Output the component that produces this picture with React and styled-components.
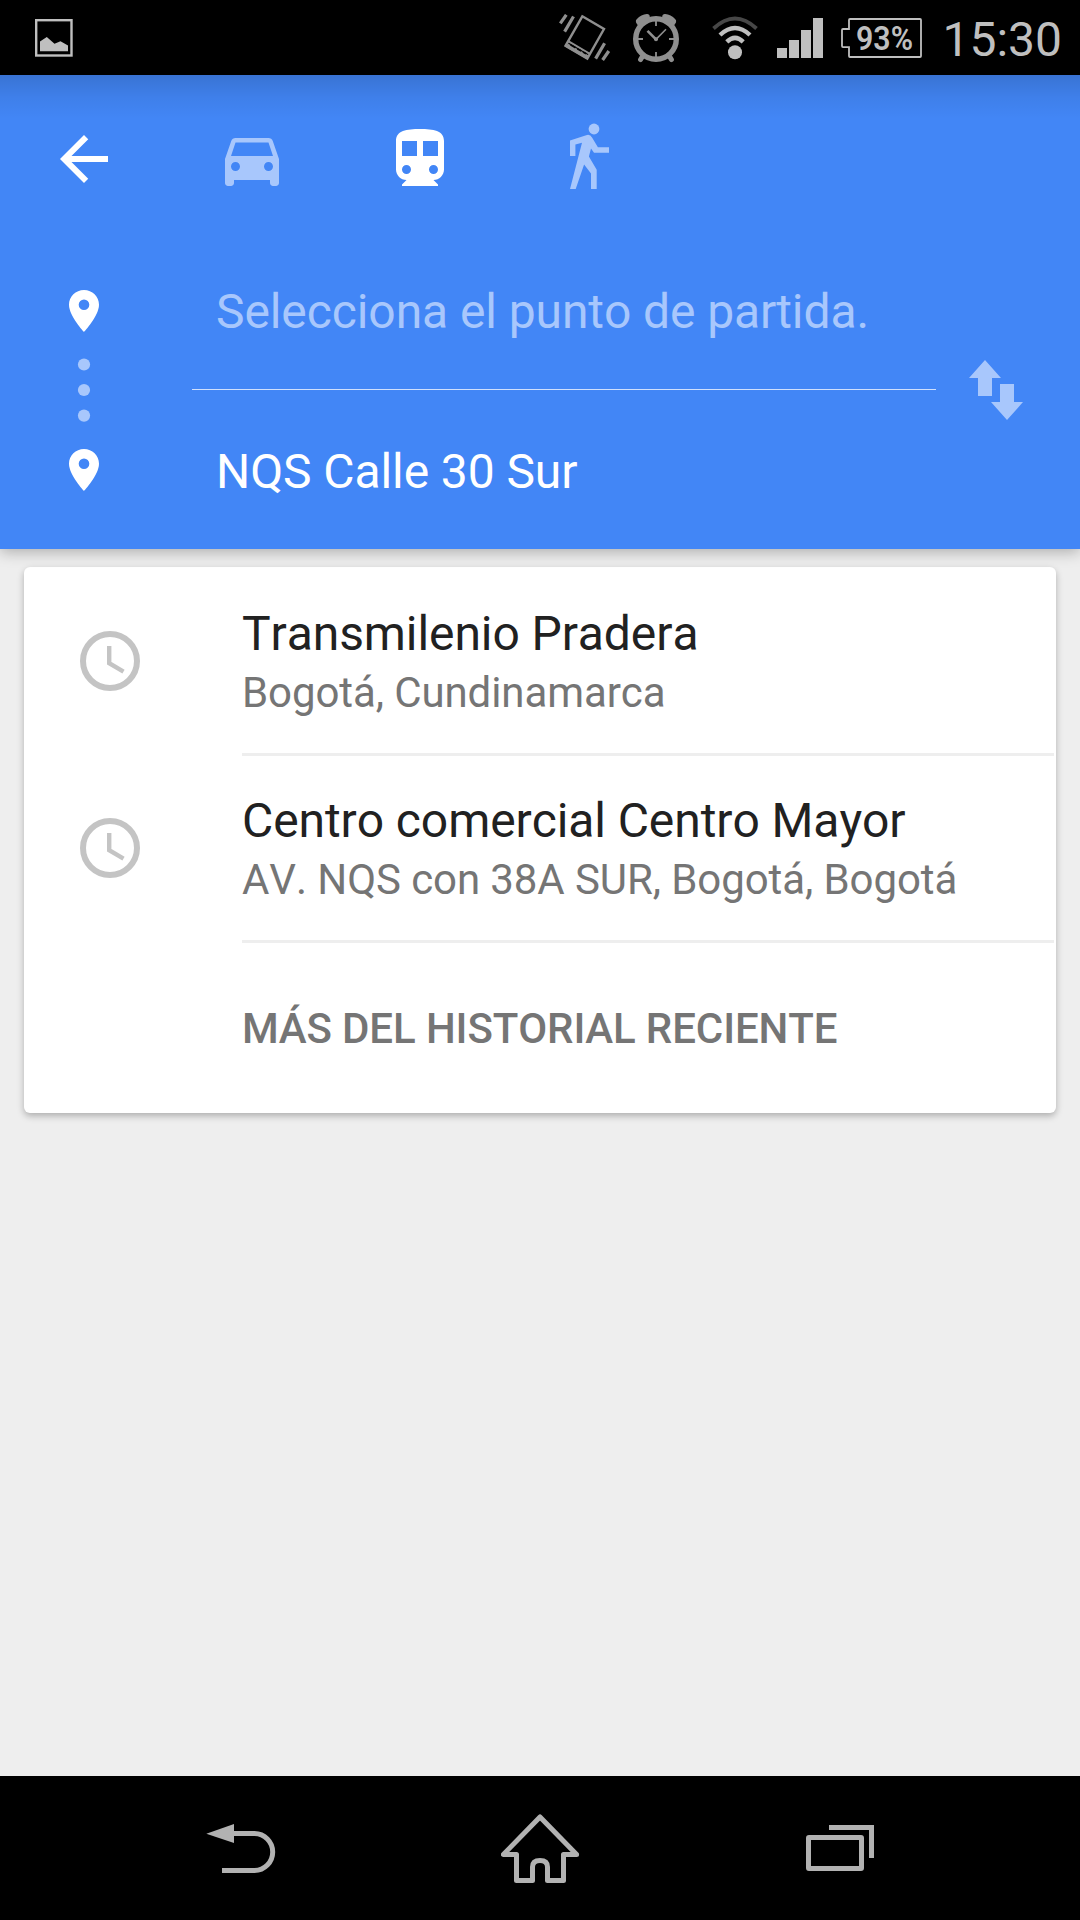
import React from "react";
import styled, { createGlobalStyle } from "styled-components";

const recentPlaces = [
  { name: "Transmilenio Pradera", address: "Bogotá, Cundinamarca" },
  {
    name: "Centro comercial Centro Mayor",
    address: "AV. NQS con 38A SUR, Bogotá, Bogotá",
  },
];

function PictureIcon() {
  return (
    <svg width="38" height="38" viewBox="35 19 38 38">
      <rect x="36.2" y="20.2" width="35.3" height="35.3" fill="none" stroke="#bfbfbf" strokeWidth="2.4" />
      <path d="M40 51.3V41.6L46.8 37L54.5 43.8L60.5 41.3L68 45.6V51.3z" fill="#bfbfbf" />
    </svg>
  );
}

function VibrateIcon() {
  return (
    <svg width="52" height="48" viewBox="559 14 52 48">
      <g fill="none" stroke="#8f8f8f">
        <path d="M582.3 16.3L604 29L587.3 58.5L565.5 45.8z" strokeWidth="2.4" />
        <path d="M568.2 41.2L589.8 53.8" strokeWidth="2" />
        <path d="M566.8 45.2L587.6 57.2" strokeWidth="4.2" />
        <path d="M570.5 44.8l5 2.9M577.3 48.7l4 2.3M583 52l3.2 1.8" stroke="#000" strokeWidth="1.8" />
        <path d="M566.3 14.8L560.3 23.4M573.5 16.5L564.6 31.6M604.6 43.2L595.6 58.6M608.8 51L602.6 60" strokeWidth="3.2" />
      </g>
    </svg>
  );
}

function AlarmIcon() {
  return (
    <svg width="48" height="50" viewBox="632 13 48 50">
      <g fill="none" stroke="#8f8f8f">
        <path d="M638.8 21.2Q642.5 17 647 16.8M673.2 21.2Q669.5 17 665 16.8" strokeWidth="5.6" strokeLinecap="round" />
        <path d="M637 24L648.5 15.8M675 24L663.5 15.8" strokeWidth="3.4" />
        <circle cx="656" cy="39" r="20.3" strokeWidth="5.4" />
        <path d="M643 55.5L640.6 59.5M669 55.5L671.4 59.5" strokeWidth="5" strokeLinecap="round" />
        <path d="M656 21v5M656 52v5M638 39h5M669 39h5" strokeWidth="1.8" />
        <path d="M647.5 30.8L656 39.4" strokeWidth="2.6" />
        <path d="M656 39.4L666 29.3" strokeWidth="1.5" />
      </g>
      <circle cx="656" cy="39.3" r="2" fill="#8f8f8f" />
    </svg>
  );
}

function WifiIcon() {
  return (
    <svg width="48" height="46" viewBox="711 14 48 46">
      <circle cx="735" cy="51.2" r="7" fill="#bfbfbf" />
      <g fill="none">
        <path d="M713.5 27.5Q735 7.5 756.5 27.5" stroke="#474747" strokeWidth="3.8" />
        <path d="M720 34Q735 20 750 34" stroke="#bfbfbf" strokeWidth="4.4" />
        <path d="M726.8 40.9Q735 32.8 743.2 40.9" stroke="#bfbfbf" strokeWidth="4.4" />
      </g>
    </svg>
  );
}

function SignalIcon() {
  return (
    <svg width="46" height="40" viewBox="777 18 46 40" fill="#bfbfbf">
      <rect x="777" y="48" width="10" height="10" />
      <rect x="789" y="40" width="10" height="18" />
      <rect x="801" y="30" width="10" height="28" />
      <rect x="813" y="18" width="10" height="40" />
    </svg>
  );
}

function BatteryIcon({ level }) {
  return (
    <svg width="82" height="40" viewBox="841 17 82 40">
      <path
        d="M849 19Q849 18 850 18H920Q921 18 921 19V55Q921 56 920 56H850Q849 56 849 55V46.2H843Q842 46.2 842 45V29Q842 28 843 28H849z"
        fill="none"
        stroke="#bfbfbf"
        strokeWidth="1.8"
      />
      <BatteryLabel x="856" y="48.5" textLength="57" lengthAdjust="spacingAndGlyphs">
        {level}
      </BatteryLabel>
    </svg>
  );
}

function BackArrowIcon() {
  return (
    <ModeIcon viewBox="0 0 24 24" $active>
      <path d="M20 11H7.83l5.59-5.59L12 4l-8 8 8 8 1.41-1.41L7.83 13H20v-2z" />
    </ModeIcon>
  );
}

function CarIcon() {
  return (
    <ModeIcon viewBox="0 0 24 24">
      <path d="M18.92 6.01C18.72 5.42 18.16 5 17.5 5h-11c-.66 0-1.21.42-1.42 1.01L3 12v8c0 .55.45 1 1 1h1c.55 0 1-.45 1-1v-1h12v1c0 .55.45 1 1 1h1c.55 0 1-.45 1-1v-8l-2.08-5.99zM6.5 16c-.83 0-1.5-.67-1.5-1.5S5.67 13 6.5 13s1.5.67 1.5 1.5S7.33 16 6.5 16zm11 0c-.83 0-1.5-.67-1.5-1.5s.67-1.5 1.5-1.5 1.5.67 1.5 1.5-.67 1.5-1.5 1.5zM5 11l1.5-4.5h11L19 11H5z" />
    </ModeIcon>
  );
}

function TrainIcon() {
  return (
    <ModeIcon viewBox="0 0 24 24" $active>
      <path
        fillRule="evenodd"
        d="M12 2c-4.42 0-8 .5-8 4v9.5C4 17.43 5.57 19 7.5 19L6 20.5v.5h12v-.5L16.5 19c1.93 0 3.5-1.57 3.5-3.5V6c0-3.5-3.58-4-8-4zM11 11H6V6h5v5zM18 11h-5V6h5v5zM7.5 17a1.5 1.5 0 1 1 0-3 1.5 1.5 0 0 1 0 3zM16.5 17a1.5 1.5 0 1 1 0-3 1.5 1.5 0 0 1 0 3z"
      />
    </ModeIcon>
  );
}

function WalkIcon() {
  return (
    <ModeIcon viewBox="0 0 24 24">
      <circle cx="14" cy="2" r="1.8" />
      <path d="M6 5.8L11.4 4.05Q12.7 3.6 13.4 4.9L15.3 8.1H19V9.9H14L13 8.5L12.3 11.2L14.9 15.6V22H13V16.8L10.7 13.8L7.9 22H6L10 6.6L7.8 7.2V11H6z" />
    </ModeIcon>
  );
}

function PinIcon() {
  return (
    <svg width="30" height="42" viewBox="0 0 30 42" fill="#fff">
      <path
        fillRule="evenodd"
        d="M15 0C6.7 0 0 6.6 0 14.8C0 25.9 15 42 15 42S30 25.9 30 14.8C30 6.6 23.3 0 15 0zM15 20.1a5.3 5.3 0 1 1 0-10.6 5.3 5.3 0 0 1 0 10.6z"
      />
    </svg>
  );
}

function RouteDots() {
  return (
    <svg width="30" height="117" viewBox="69 332 30 117" fill="#a8c7fc">
      <circle cx="84" cy="364.5" r="6.1" />
      <circle cx="84" cy="390" r="6.1" />
      <circle cx="84" cy="415.6" r="6.1" />
    </svg>
  );
}

function SwapIcon() {
  return (
    <svg width="54" height="60" viewBox="0 0 54 60" fill="#a8c7fc">
      <path d="M16 0L32 18H23V36H9V18H0z" />
      <path d="M31 24H45V42H54L38 60L22 42H31z" />
    </svg>
  );
}

function HistoryIcon() {
  return (
    <svg width="60" height="60" viewBox="0 0 60 60" fill="none" stroke="#c4c4c4">
      <circle cx="30" cy="30" r="27" strokeWidth="6" />
      <path d="M29.2 15V32.2L43.5 40.7" strokeWidth="4.4" />
    </svg>
  );
}

function NavBackIcon() {
  return (
    <svg width="70" height="52" viewBox="206 1822 70 52">
      <path d="M206.3 1833.7L234 1824V1843z" fill="#b2b2b2" />
      <path d="M233 1833.5H254.5A18.2 18.5 0 0 1 254.5 1870.5H222" fill="none" stroke="#b2b2b2" strokeWidth="5" />
    </svg>
  );
}

function NavHomeIcon() {
  return (
    <svg width="80" height="72" viewBox="501 1812 80 72">
      <path
        d="M540 1817L503.4 1854.5H516.5V1880.5H532.5V1867Q532.5 1860.5 540 1860.5Q547.5 1860.5 547.5 1867V1880.5H563.5V1854.5H576.6z"
        fill="none"
        stroke="#b2b2b2"
        strokeWidth="5"
        strokeLinejoin="round"
      />
    </svg>
  );
}

function NavRecentIcon() {
  return (
    <svg width="68" height="46" viewBox="806 1825 68 46" fill="none" stroke="#b2b2b2" strokeWidth="5">
      <rect x="808.5" y="1837.5" width="53" height="31" rx="0.5" />
      <path d="M829 1827.5H871.5V1858" />
    </svg>
  );
}

function App() {
  return (
    <>
      <GlobalStyle />
      <Screen>
        <StatusBar>
          <PictureIcon />
          <StatusIcons>
            <VibrateIcon />
            <AlarmIcon />
            <WifiIcon />
            <SignalIcon />
            <BatteryIcon level="93%" />
          </StatusIcons>
          <Clock>15:30</Clock>
        </StatusBar>

        <Header>
          <ModeBar>
            <BackArrowIcon />
            <CarIcon />
            <TrainIcon />
            <WalkIcon />
          </ModeBar>
          <RouteForm>
            <RouteRail>
              <PinIcon />
              <RouteDots />
              <PinIcon />
            </RouteRail>
            <RouteFields>
              <OriginField>Selecciona el punto de partida.</OriginField>
              <DestinationField>NQS Calle 30 Sur</DestinationField>
            </RouteFields>
            <SwapButton>
              <SwapIcon />
            </SwapButton>
          </RouteForm>
        </Header>

        <Content>
          <HistoryCard>
            {recentPlaces.map((place) => (
              <PlaceRow key={place.name}>
                <HistoryIcon />
                <PlaceText>
                  <PlaceName>{place.name}</PlaceName>
                  <PlaceAddress>{place.address}</PlaceAddress>
                </PlaceText>
              </PlaceRow>
            ))}
            <MoreHistory>MÁS DEL HISTORIAL RECIENTE</MoreHistory>
          </HistoryCard>
        </Content>

        <NavBar>
          <NavBackIcon />
          <NavHomeIcon />
          <NavRecentIcon />
        </NavBar>
      </Screen>
    </>
  );
}

export default App;

// Styled Components
const GlobalStyle = createGlobalStyle`
  * {
    box-sizing: border-box;
  }

  body {
    margin: 0;
    background: #eeeeee;
    font-family: Roboto, "Liberation Sans", sans-serif;
    font-kerning: none;
  }

  svg {
    display: block;
    flex-shrink: 0;
  }
`;

const Screen = styled.div`
  display: flex;
  flex-direction: column;
  width: 1080px;
  height: 1920px;
  overflow: hidden;
`;

const StatusBar = styled.div`
  display: flex;
  align-items: center;
  height: 75px;
  padding: 0 18px 0 35px;
  background: #000;
`;

const StatusIcons = styled.div`
  display: flex;
  align-items: center;
  gap: 20px;
  margin-left: auto;

  svg:nth-child(1) {
    margin-right: 1px;
  }

  svg:nth-child(2) {
    margin-right: 11px;
  }

  svg:nth-child(4),
  svg:nth-child(5) {
    margin-left: -2px;
  }
`;

const BatteryLabel = styled.text`
  font-size: 33px;
  font-weight: 600;
  fill: #bfbfbf;
`;

const Clock = styled.span`
  margin-left: 19px;
  padding-top: 4px;
  font-size: 48px;
  line-height: 56px;
  color: #bfbfbf;
`;

const Header = styled.header`
  position: relative;
  z-index: 1;
  height: 474px;
  background: linear-gradient(rgba(0, 0, 0, 0.14), rgba(0, 0, 0, 0.05) 22px, rgba(0, 0, 0, 0) 44px), #4286f6;
  box-shadow: 0 3px 14px rgba(0, 0, 0, 0.28);
`;

const ModeBar = styled.div`
  display: flex;
  gap: 96px;
  height: 120px;
  padding: 48px 48px 0;
`;

const ModeIcon = styled.svg`
  width: 72px;
  height: 72px;
  overflow: visible;
  fill: ${(props) => (props.$active ? "#fff" : "#a8c7fc")};
`;

const RouteForm = styled.div`
  display: grid;
  grid-template-columns: 192px 744px 1fr;
  height: 354px;
`;

const RouteRail = styled.div`
  display: flex;
  flex-direction: column;
  padding: 95px 0 0 69px;
`;

const RouteFields = styled.div`
  font-size: 48px;
  line-height: 56px;
  letter-spacing: -0.09px;
`;

const OriginField = styled.div`
  height: 195px;
  padding: 89px 0 0 24px;
  border-bottom: 1px solid #d0e0fd;
  color: #a8c7fc;
`;

const DestinationField = styled.div`
  padding: 54px 0 0 24px;
  color: #fff;
`;

const SwapButton = styled.div`
  padding: 165px 0 0 33px;
`;

const Content = styled.main`
  flex: 1;
  padding: 18px 24px;
  background: #eeeeee;
`;

const HistoryCard = styled.section`
  height: 546px;
  padding: 2px 2px 0 0;
  border-radius: 6px;
  background: #fff;
  box-shadow: 0 3px 7px rgba(0, 0, 0, 0.27);
`;

const PlaceRow = styled.div`
  display: flex;
  height: 187px;
  padding-left: 56px;

  > svg {
    margin: 62px 102px 0 0;
  }
`;

const PlaceText = styled.div`
  flex: 1;
  padding-top: 37px;
  border-bottom: 3px solid #eeeeee;
  white-space: nowrap;
`;

const PlaceName = styled.div`
  font-size: 48px;
  line-height: 56px;
  letter-spacing: -0.09px;
  color: #212121;
`;

const PlaceAddress = styled.div`
  margin-top: 6px;
  font-size: 42px;
  line-height: 50px;
  letter-spacing: -0.09px;
  color: #757575;
`;

const MoreHistory = styled.div`
  padding: 61px 0 0 218px;
  font-size: 42px;
  font-weight: 500;
  line-height: 50px;
  letter-spacing: -0.1px;
  color: #757575;
`;

const NavBar = styled.nav`
  display: flex;
  align-items: center;
  justify-content: space-between;
  height: 144px;
  padding: 0 206px;
  background: #000;
`;
